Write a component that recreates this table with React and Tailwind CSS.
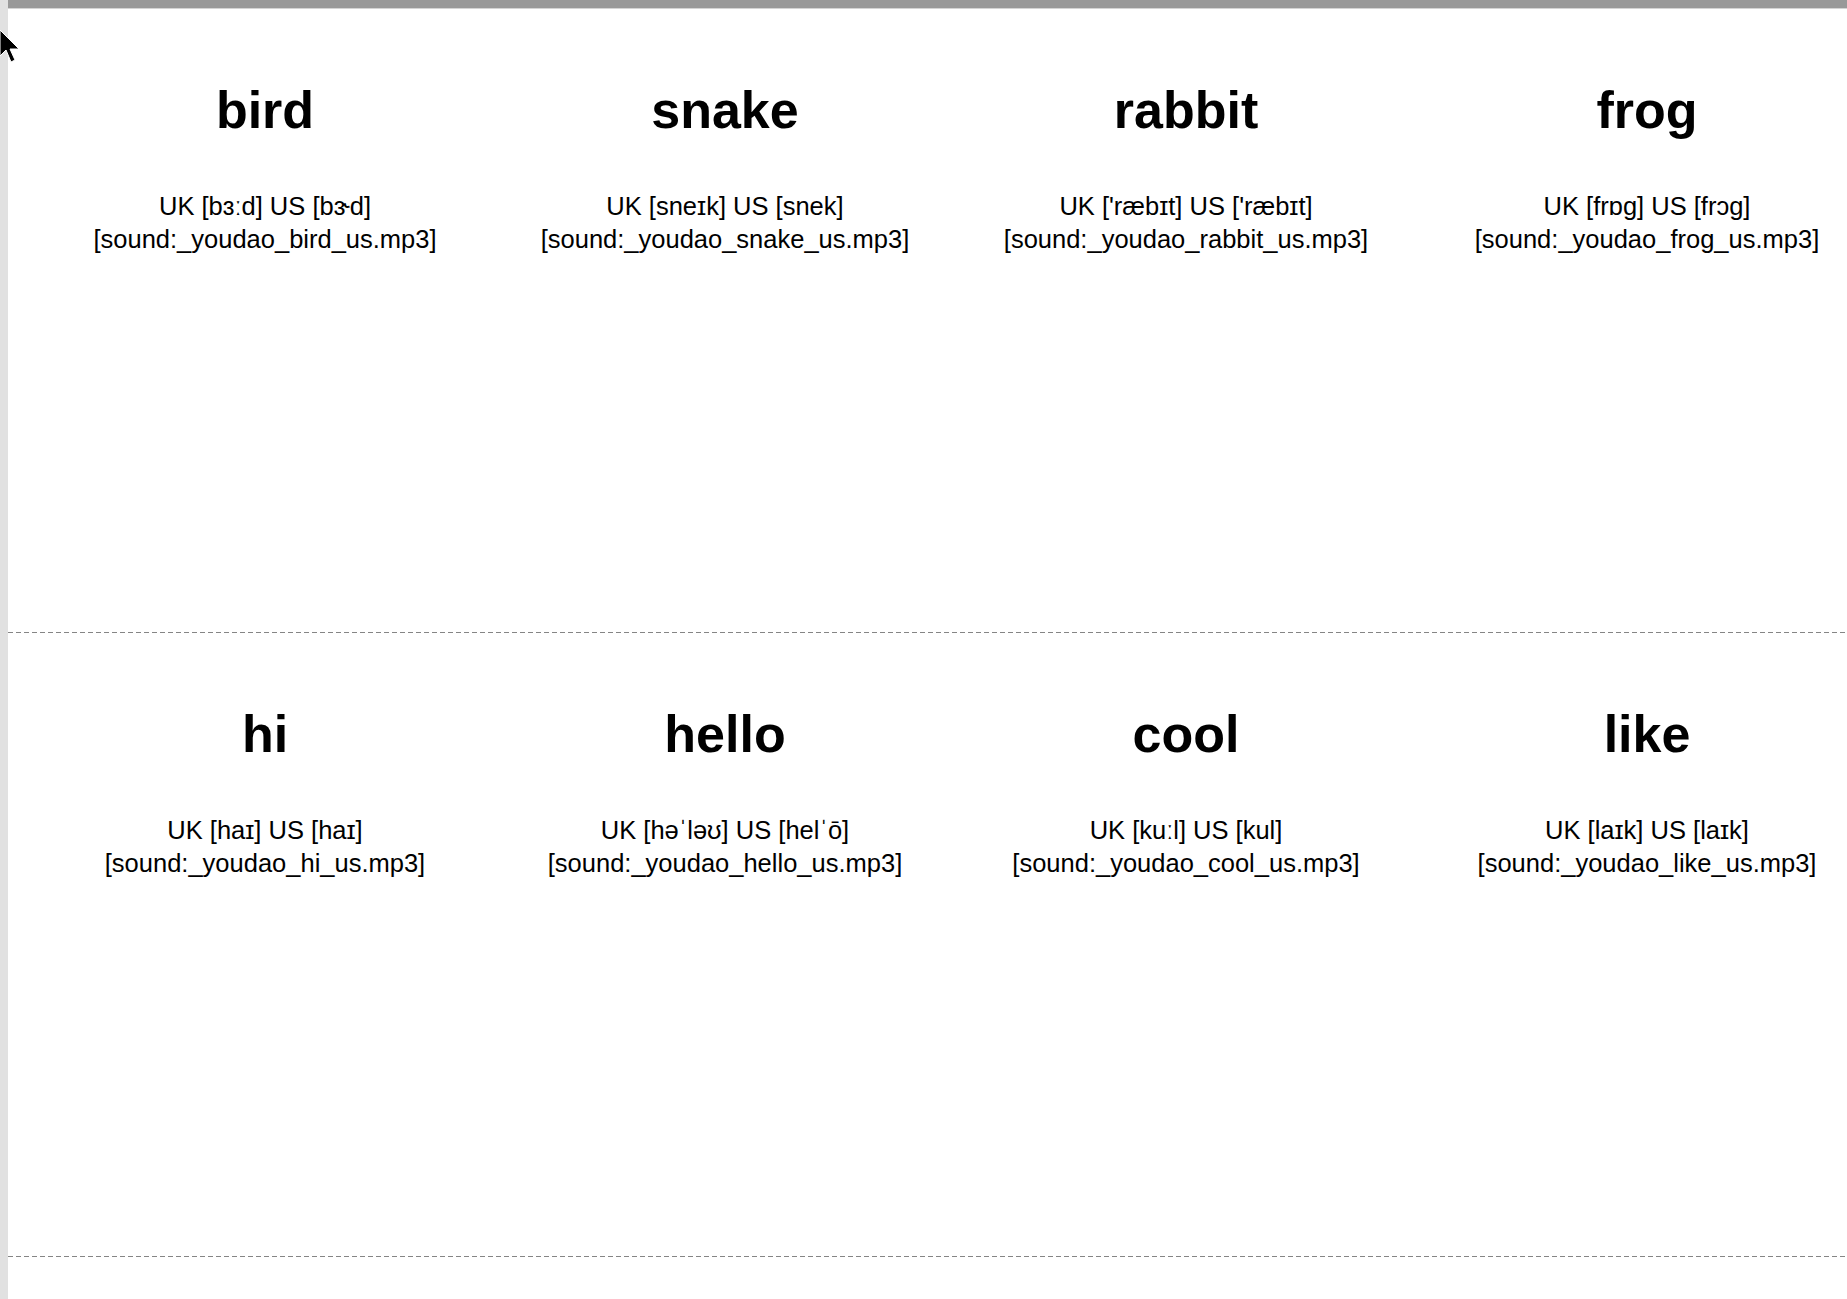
const cards = [
  { word: 'bird', uk: 'bɜːd', us: 'bɝd' },
  { word: 'snake', uk: 'sneɪk', us: 'snek' },
  { word: 'rabbit', uk: "'ræbɪt", us: "'ræbɪt" },
  { word: 'frog', uk: 'frɒg', us: 'frɔg' },
  { word: 'hi', uk: 'haɪ', us: 'haɪ' },
  { word: 'hello', uk: 'həˈləʊ', us: 'helˈō' },
  { word: 'cool', uk: 'kuːl', us: 'kul' },
  { word: 'like', uk: 'laɪk', us: 'laɪk' },
];

const rows = [cards.slice(0, 4), cards.slice(4, 8)];

function Card({ word, uk, us }) {
  return (
    <div className="pl-[55px] pt-[72px] flex flex-col items-center text-center text-black">
      <h1 className="text-[52px] font-bold leading-[1.149]">{word}</h1>
      <div className="mt-[49px] text-[25.5px] leading-[33px] whitespace-nowrap">
        <p>UK [{uk}] US [{us}]</p>
        <p>[sound:_youdao_{word}_us.mp3]</p>
      </div>
    </div>
  );
}

export default function App() {
  return (
    <div
      className="relative flex w-[1847px] h-[1299px] overflow-hidden bg-white"
      style={{ fontFamily: '"Liberation Sans", Arial, sans-serif' }}
    >
      {/* left edge */}
      <div className="w-2 shrink-0 bg-[#e1e1e1]" />

      <div className="flex-1 flex flex-col min-w-0">
        {/* top bar */}
        <div className="h-2 shrink-0 bg-[#999999] border-b border-[#d4d4d4] box-content" />

        {rows.map((row, i) => (
          <div key={i} className="shrink-0 h-[624px] flex flex-col">
            <div className="flex-1 grid grid-cols-[459px_461px_461px_461px]">
              {row.map((c) => (
                <Card key={c.word} {...c} />
              ))}
            </div>
            <div className="h-px w-full bg-[repeating-linear-gradient(to_right,#858585_0px,#858585_5px,transparent_5px,transparent_8px)]" />
          </div>
        ))}
      </div>

      {/* mouse pointer */}
      <svg className="absolute left-0 top-[29px]" width="22" height="36" viewBox="0 0 22 36">
        <path d="M0 1 L0 27 L6 21 L11 33 L15 31 L10 20 L19 20 Z" fill="#000" stroke="#fff" strokeWidth="1" />
      </svg>
    </div>
  );
}
